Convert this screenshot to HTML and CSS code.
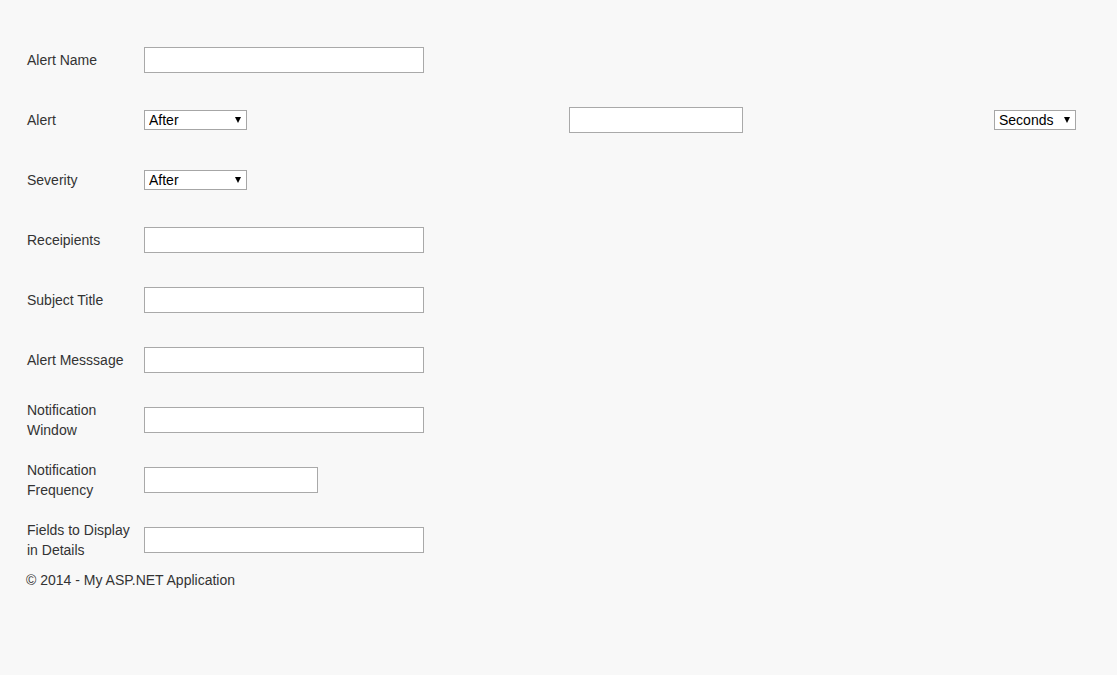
FILE: index.html
```html
<!DOCTYPE html>
<html>
<head>
<meta charset="utf-8">
<title>Alert</title>
<link rel="stylesheet" href="styles.css">
</head>
<body>
<div class="page">
  <form class="form">
    <div class="row">
      <label class="lbl">Alert Name</label>
      <div class="cell"><input class="txt wide" type="text"></div>
    </div>
    <div class="row">
      <label class="lbl">Alert</label>
      <div class="cell"><span class="sel sel-after"><select><option>After</option></select></span></div>
      <div class="cell"><input class="txt mid" type="text"></div>
      <div class="cell"><span class="sel sel-sec"><select><option>Seconds</option></select></span></div>
    </div>
    <div class="row">
      <label class="lbl">Severity</label>
      <div class="cell"><span class="sel sel-after"><select><option>After</option></select></span></div>
    </div>
    <div class="row">
      <label class="lbl">Receipients</label>
      <div class="cell"><input class="txt wide" type="text"></div>
    </div>
    <div class="row">
      <label class="lbl">Subject Title</label>
      <div class="cell"><input class="txt wide" type="text"></div>
    </div>
    <div class="row">
      <label class="lbl">Alert Messsage</label>
      <div class="cell"><input class="txt wide" type="text"></div>
    </div>
    <div class="row">
      <label class="lbl">Notification<br>Window</label>
      <div class="cell"><input class="txt wide" type="text"></div>
    </div>
    <div class="row">
      <label class="lbl">Notification<br>Frequency</label>
      <div class="cell"><input class="txt mid" type="text"></div>
    </div>
    <div class="row">
      <label class="lbl">Fields to Display<br>in Details</label>
      <div class="cell"><input class="txt wide" type="text"></div>
    </div>
  </form>
  <footer class="footer">© 2014 - My ASP.NET Application</footer>
</div>
</body>
</html>
```

FILE: styles.css
```css
html, body {
  margin: 0;
  padding: 0;
  background: #f8f8f8;
}
body {
  font-family: "Liberation Sans", Arial, sans-serif;
  font-size: 14px;
  line-height: 20px;
  color: #333;
}
.page {
  padding: 30px 0 0 27px;
}
.form {
  display: flex;
  flex-direction: column;
}
.row {
  display: grid;
  grid-template-columns: 117px 425px 425px auto;
  height: 60px;
  align-items: center;
}
.lbl {
  display: block;
}
.cell {
  display: flex;
  align-items: center;
}
.txt {
  box-sizing: border-box;
  height: 26px;
  border: 1px solid #a9a9a9;
  background: #fff;
  margin: 0;
  padding: 2px 4px;
  font: inherit;
}
.wide { width: 280px; }
.mid { width: 174px; }
.sel {
  position: relative;
  display: inline-block;
}
.sel select {
  -webkit-appearance: none;
  appearance: none;
  box-sizing: border-box;
  height: 20px;
  margin: 0;
  border: 1px solid #a6a6a6;
  border-radius: 0;
  background: #fff;
  color: #000;
  font-family: "Liberation Sans", Arial, sans-serif;
  font-size: 14px;
  line-height: 18px;
  padding: 0 0 0 4px;
}
.sel-after select { width: 103px; }
.sel-sec select { width: 82px; }
.sel::after {
  content: "";
  position: absolute;
  right: 6px;
  top: 7px;
  border-left: 3.5px solid transparent;
  border-right: 3.5px solid transparent;
  border-top: 6px solid #000;
  pointer-events: none;
}
.footer {
  margin-left: -1px;
  height: 20px;
}
```
